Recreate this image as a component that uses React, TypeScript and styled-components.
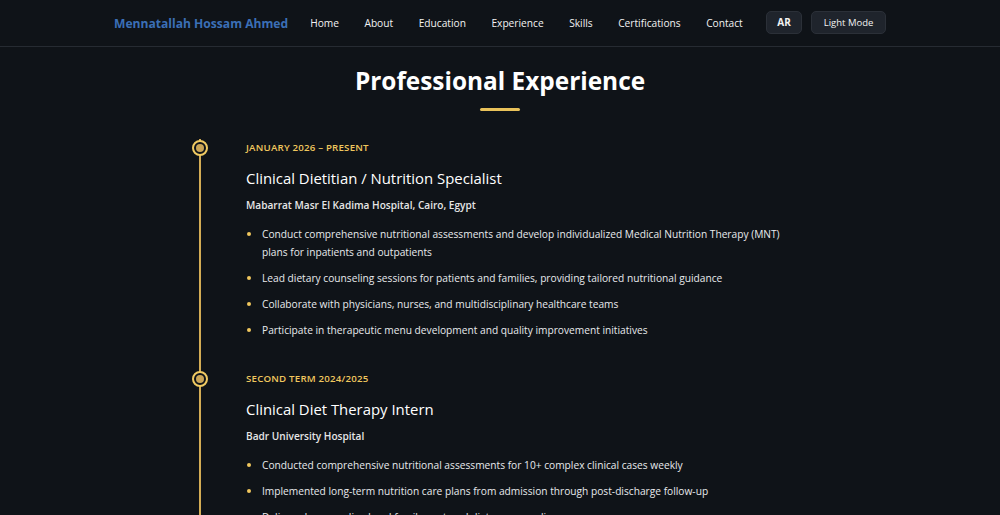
import styled, { createGlobalStyle } from 'styled-components'

const GlobalStyle = createGlobalStyle`
  html, body {
    margin: 0;
    padding: 0;
    background: #0f1318;
  }
  body {
    font-family: "Open Sans", "Noto Sans", sans-serif;
    color: #e8eaed;
  }
`

const navLinks = ['Home', 'About', 'Education', 'Experience', 'Skills', 'Certifications', 'Contact']

const jobs = [
  {
    date: 'January 2026 – Present',
    title: 'Clinical Dietitian / Nutrition Specialist',
    place: 'Mabarrat Masr El Kadima Hospital, Cairo, Egypt',
    points: [
      'Conduct comprehensive nutritional assessments and develop individualized Medical Nutrition Therapy (MNT) plans for inpatients and outpatients',
      'Lead dietary counseling sessions for patients and families, providing tailored nutritional guidance',
      'Collaborate with physicians, nurses, and multidisciplinary healthcare teams',
      'Participate in therapeutic menu development and quality improvement initiatives',
    ],
  },
  {
    date: 'Second Term 2024/2025',
    title: 'Clinical Diet Therapy Intern',
    place: 'Badr University Hospital',
    points: [
      'Conducted comprehensive nutritional assessments for 10+ complex clinical cases weekly',
      'Implemented long-term nutrition care plans from admission through post-discharge follow-up',
      'Delivered personalized and family-centered dietary counseling',
    ],
  },
]

export default function App() {
  return (
    <Page>
      <GlobalStyle />
      <Header>
        <HeaderInner>
          <Brand>Mennatallah Hossam Ahmed</Brand>
          <Nav>
            {navLinks.map((l) => (
              <NavLink key={l}>{l}</NavLink>
            ))}
          </Nav>
          <Actions>
            <HeaderButton $w={36}>AR</HeaderButton>
            <HeaderButton $w={75} $light>Light Mode</HeaderButton>
          </Actions>
        </HeaderInner>
      </Header>

      <Section>
        <SectionTitle>Professional Experience</SectionTitle>
        <TitleBar />
        <Timeline>
          {jobs.map((job) => (
            <Item key={job.title}>
              <Dot />
              <DateLabel>{job.date}</DateLabel>
              <JobTitle>{job.title}</JobTitle>
              <Place>{job.place}</Place>
              <Points>
                {job.points.map((p) => (
                  <Point key={p}>{p}</Point>
                ))}
              </Points>
            </Item>
          ))}
        </Timeline>
      </Section>
    </Page>
  )
}

const Page = styled.div`
  height: 515px;
  overflow: hidden;
  background: #0f1318;
`

const Header = styled.header`
  height: 46px;
  border-bottom: 1px solid #262b32;
  background: #0f1318;
`

const HeaderInner = styled.div`
  width: 772px;
  height: 100%;
  margin: 0 auto;
  display: flex;
  align-items: center;
`

const Brand = styled.div`
  font-size: 12.1px;
  font-weight: 700;
  color: #3b6fb6;
  white-space: nowrap;
  margin-right: 22px;
`

const Nav = styled.nav`
  display: flex;
  gap: 25.5px;
  flex: 1;
`

const NavLink = styled.a`
  font-size: 10.2px;
  font-weight: 500;
  color: #f2f2f2;
  white-space: nowrap;
`

const Actions = styled.div`
  display: flex;
  gap: 9px;
`

const HeaderButton = styled.button<{ $light?: boolean; $w: number }>`
  width: ${(p) => p.$w}px;
  height: 23px;
  padding: 0;
  border-radius: 5px;
  border: 1px solid #2b3038;
  background: #1f242c;
  color: #f2f2f2;
  font-family: "Open Sans", sans-serif;
  font-size: ${(p) => (p.$light ? '9.5px' : '10px')};
  font-weight: ${(p) => (p.$light ? 500 : 700)};
  white-space: nowrap;
  margin-top: -2px;
`

const Section = styled.section`
  display: flex;
  flex-direction: column;
  align-items: center;
  padding-top: 16px;
`

const SectionTitle = styled.h2`
  margin: 0;
  font-size: 24.4px;
  font-weight: 700;
  color: #ffffff;
  line-height: 36px;
`

const TitleBar = styled.div`
  width: 40px;
  height: 3px;
  background: #e9c25a;
  margin-top: 9px;
  border-radius: 2px;
`

const Timeline = styled.div`
  align-self: stretch;
  margin-left: 199px;
  margin-top: 28px;
  border-left: 2px solid #d4ad55;
  width: 600px;
`

const Item = styled.div`
  position: relative;
  padding-left: 45px;
  padding-bottom: 23px;
`

const Dot = styled.span`
  position: absolute;
  left: -9px;
  top: -1px;
  width: 12px;
  height: 12px;
  border: 2px solid #f0ca62;
  border-radius: 50%;
  background: #0f1318;
  &::after {
    content: '';
    position: absolute;
    inset: 2px;
    border-radius: 50%;
    background: #c9a456;
  }
`

const DateLabel = styled.div`
  font-size: 9.7px;
  font-weight: 600;
  text-transform: uppercase;
  color: #f0c75e;
  letter-spacing: 0.2px;
  line-height: 14px;
  margin-top: 2px;
`

const JobTitle = styled.h3`
  margin: 13px 0 0;
  font-size: 14.9px;
  font-weight: 500;
  color: #ffffff;
  line-height: 20px;
`

const Place = styled.div`
  margin-top: 10px;
  font-size: 10.1px;
  font-weight: 600;
  color: #e6e6e6;
  line-height: 14px;
`

const Points = styled.ul`
  list-style: none;
  margin: 13px 0 0;
  padding: 0;
  width: 545px;
`

const Point = styled.li`
  position: relative;
  padding-left: 16px;
  font-size: 10.2px;
  line-height: 18px;
  color: #e8eaed;
  margin-bottom: 8px;
  &::before {
    content: '';
    position: absolute;
    left: 1px;
    top: 7px;
    width: 4px;
    height: 4px;
    border-radius: 50%;
    background: #f0c75e;
  }
`
